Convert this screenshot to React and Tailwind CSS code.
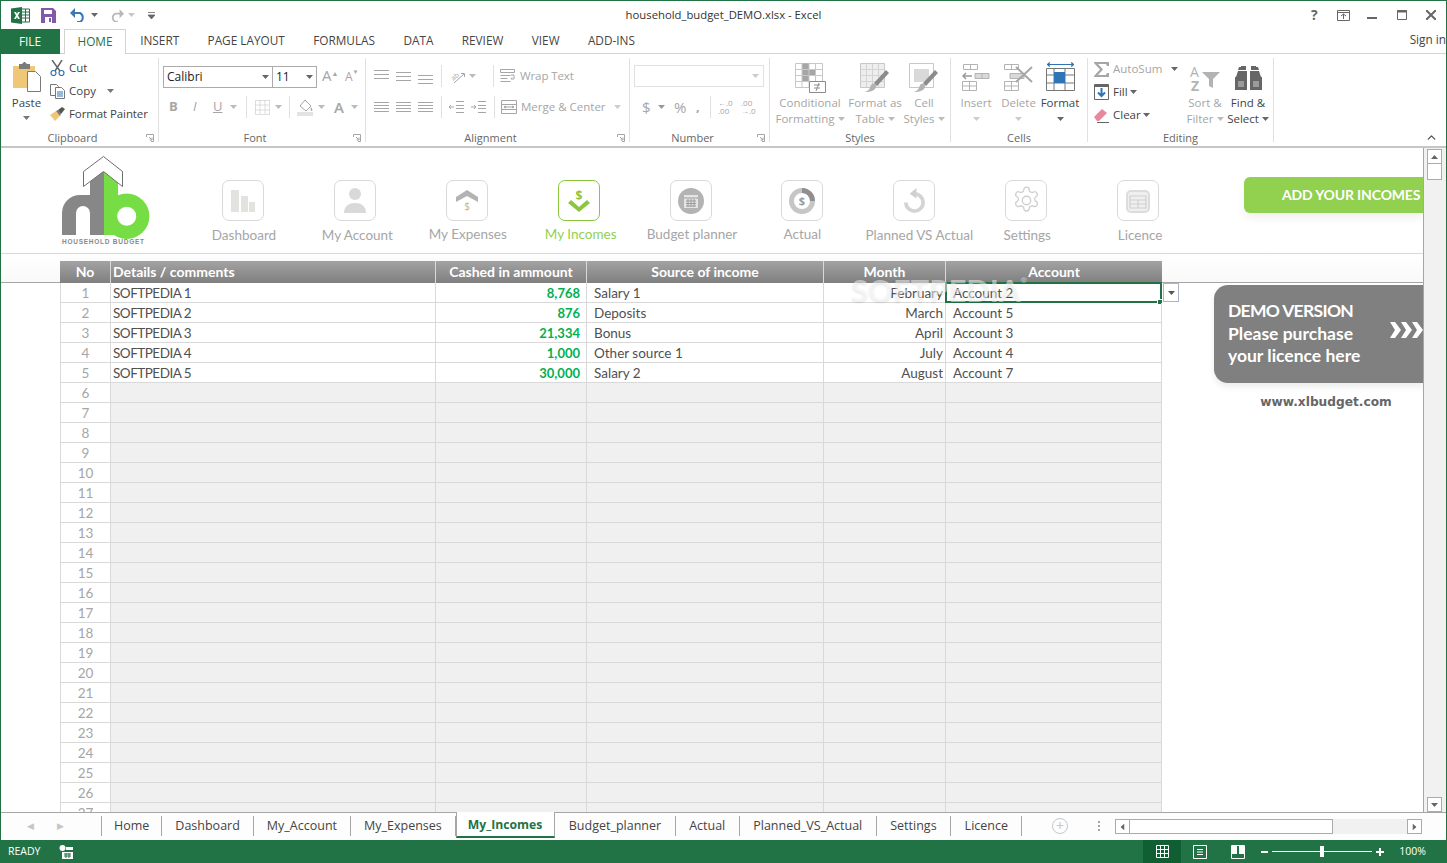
import { ChevronUp } from "lucide-react";

const rows = [
  ["SOFTPEDIA 1", "8,768", "Salary 1", "February", "Account 2"],
  ["SOFTPEDIA 2", "876", "Deposits", "March", "Account 5"],
  ["SOFTPEDIA 3", "21,334", "Bonus", "April", "Account 3"],
  ["SOFTPEDIA 4", "1,000", "Other source 1", "July", "Account 4"],
  ["SOFTPEDIA 5", "30,000", "Salary 2", "August", "Account 7"],
];
const emptyRows = Array.from({ length: 22 }, (_, i) => i + 6);

const sheets = ["Home", "Dashboard", "My_Account", "My_Expenses", "My_Incomes", "Budget_planner", "Actual", "Planned_VS_Actual", "Settings", "Licence"];

const Caret = ({ className = "" }) => (
  <svg width="7" height="4" viewBox="0 0 7 4" className={`shrink-0 ${className}`}>
    <path d="M0 0h7L3.5 4z" fill="currentColor" />
  </svg>
);

// lines used by the alignment buttons
const Lines = ({ rows: r }) => (
  <svg width="15" height="15" viewBox="0 0 15 15" className="shrink-0">
    {r.map((y, i) => (
      <path key={i} d={`M0 ${y}.5h15`} stroke="#a6a6a6" />
    ))}
  </svg>
);

const Group = ({ width, label, launcher, children }) => (
  <div className={`${width} h-[84px] mt-[4px] border-r border-[#e1e1e1] flex flex-col shrink-0`}>
    <div className="h-[73px] flex">{children}</div>
    <div className={`relative h-[11px] leading-[14px] text-center text-[11px] text-[#666] ${launcher ? "pr-[14px]" : ""}`}>
      {label}
      {launcher && (
        <svg width="8" height="8" viewBox="0 0 8 8" className="absolute right-[4px] top-[3px]">
          <path d="M.5 3V.5H7.5V7.5H5M3 3l3 3M6 3.5V6H3.5" fill="none" stroke="#a6a6a6" />
        </svg>
      )}
    </div>
  </div>
);

const BigButton = ({ width, icon, line1, line2, caret, dark }) => (
  <div className={`${width} flex flex-col items-center shrink-0 leading-[16px] text-[11.5px] ${dark ? "text-[#444]" : "text-[#a6a6a6]"}`}>
    <div className="h-[31px] mt-[4px] flex items-center justify-center">{icon}</div>
    <div className="mt-[2px] whitespace-nowrap">{line1}</div>
    <div className="flex items-center gap-[3px] whitespace-nowrap h-[16px]">
      {line2}
      {caret && <Caret className={dark ? "text-[#666]" : "text-[#bbb]"} />}
    </div>
  </div>
);

const Divider = ({ className = "" }) => <div className={`w-px h-[22px] bg-[#e1e1e1] shrink-0 ${className}`} />;

const Logo = () => (
  <svg width="92" height="92" viewBox="0 0 92 92" className="shrink-0">
    <path d="M2 80V58a18 18 0 0 1 18-18h10V16h14v64H30V58a7 7 0 0 0-7-7a7 7 0 0 0-7 7v22z" fill="#878787" />
    <path d="M44 16L58 27V80H44z" fill="#76dd45" />
    <circle cx="66.7" cy="61.3" r="22.7" fill="#76dd45" />
    <circle cx="66.7" cy="61.3" r="9.5" fill="#fff" />
    <path d="M23.5 16.500L43.5 1.500L62.5 16.500V31.500L43.5 16.500L23.5 31.500z" fill="#fff" stroke="#6f6f6f" />
    <text x="2" y="89" fontSize="6.5" fontWeight="700" letterSpacing="0.75" fill="#8a8a8a" fontFamily="'Liberation Sans',sans-serif">HOUSEHOLD BUDGET</text>
  </svg>
);

const navItems = [
  {
    label: "Dashboard",
    labelClass: "ml-[2px] mt-[5px]",
    icon: (
      <svg width="24" height="22" viewBox="0 0 24 22">
        <path d="M0 0h8v22H0zM10 6h7v16h-7zM18 12h6v10h-6z" fill="#e2e2df" />
      </svg>
    ),
  },
  {
    label: "My Account",
    labelClass: "ml-[5px] mt-[5px]",
    icon: (
      <svg width="24" height="25" viewBox="0 0 24 25">
        <circle cx="12" cy="6" r="6" fill="#d9d9d9" />
        <path d="M1 25c0-7 5-10 11-10s11 3 11 10z" fill="#d9d9d9" />
      </svg>
    ),
  },
  {
    label: "My Expenses",
    labelClass: "ml-[2px] mt-[4px]",
    icon: (
      <svg width="22" height="21" viewBox="0 0 22 21" className="overflow-visible">
        <path d="M0 7L11 0l11 7v5L11 6 0 12z" fill="#b3b3b3" />
        <text x="11" y="20" fontSize="10" textAnchor="middle" fill="#b3b3b3" fontFamily="'Open Sans',sans-serif">$</text>
      </svg>
    ),
  },
  {
    label: "My Incomes",
    active: true,
    labelClass: "ml-[4px] mt-[4px]",
    icon: (
      <svg width="22" height="22" viewBox="0 0 22 22" className="overflow-visible">
        <text x="11" y="10" fontSize="12" textAnchor="middle" fontWeight="700" fill="#8cc63f" fontFamily="'Open Sans',sans-serif">$</text>
        <path d="M0 13l3-3 8 7 8-7 3 3-11 9z" fill="#8cc63f" />
      </svg>
    ),
  },
  {
    label: "Budget planner",
    labelClass: "ml-[3px] mt-[4px]",
    icon: (
      <svg width="26" height="26" viewBox="0 0 26 26">
        <circle cx="13" cy="13" r="13" fill="#b3b3b3" />
        <path d="M6 7h14v13H6z" fill="#e4e4e4" />
        <path d="M6 10h14M8 13h10M8 15.5h10M8 18h10M10 11v8M13 11v8M16 11v8" stroke="#9a9a9a" />
      </svg>
    ),
  },
  {
    label: "Actual",
    labelClass: "mt-[4px]",
    icon: (
      <svg width="26" height="26" viewBox="0 0 26 26">
        <circle cx="13" cy="13" r="10.5" fill="none" stroke="#c6c6c6" strokeWidth="5" />
        <path d="M13 2.500A10.500 10.500 0 0 1 23.5 13" fill="none" stroke="#8f8f8f" strokeWidth="5" />
        <text x="13" y="17" fontSize="11" fontWeight="700" textAnchor="middle" fill="#9a9a9a" fontFamily="'Open Sans',sans-serif">$</text>
      </svg>
    ),
  },
  {
    label: "Planned VS Actual",
    labelClass: "ml-[10px] mt-[5px]",
    icon: (
      <svg width="23" height="25" viewBox="0 0 24 26">
        <path d="M12 6a9 9 0 1 1-9 9" fill="none" stroke="#d4d4d4" strokeWidth="4" />
        <path d="M14 0v11l-7-5z" fill="#cfcfcf" />
      </svg>
    ),
  },
  {
    label: "Settings",
    labelClass: "ml-[2px] mt-[5px]",
    icon: (
      <svg width="29" height="29" viewBox="0 0 24 24" fill="none" stroke="#cfcfcf" strokeWidth="1.1">
        <circle cx="12" cy="12" r="3.5" />
        <path d="M12.200 1h-.4a2 2 0 0 0-2 2v.2a2 2 0 0 1-1 1.700l-.4.200a2 2 0 0 1-2 0l-.2-.1a2 2 0 0 0-2.700.7l-.2.400a2 2 0 0 0 .7 2.700l.2.100a2 2 0 0 1 1 1.700v.5a2 2 0 0 1-1 1.700l-.2.100a2 2 0 0 0-.7 2.700l.2.400a2 2 0 0 0 2.700.7l.2-.1a2 2 0 0 1 2 0l.4.200a2 2 0 0 1 1 1.700v.2a2 2 0 0 0 2 2h.4a2 2 0 0 0 2-2v-.2a2 2 0 0 1 1-1.700l.4-.2a2 2 0 0 1 2 0l.2.100a2 2 0 0 0 2.700-.7l.2-.4a2 2 0 0 0-.7-2.700l-.2-.1a2 2 0 0 1-1-1.700v-.5a2 2 0 0 1 1-1.700l.2-.1a2 2 0 0 0 .7-2.700l-.2-.4a2 2 0 0 0-2.700-.7l-.2.100a2 2 0 0 1-2 0l-.4-.2a2 2 0 0 1-1-1.700V3a2 2 0 0 0-2-2z" />
      </svg>
    ),
  },
  {
    label: "Licence",
    labelClass: "ml-[4px] mt-[5px]",
    icon: (
      <svg width="24" height="24" viewBox="0 0 24 24" fill="none" stroke="#dcdcdc">
        <rect x="1" y="2" width="22" height="21" rx="4" strokeWidth="2" fill="#efefef" />
        <path d="M4 7h16v12H4zM4 11h16M4 15h16M12 11v8" strokeWidth="1.2" fill="none" stroke="#d0d0d0" />
      </svg>
    ),
  },
];

const Ribbon = () => (
  <div className="h-[94px] flex shrink-0 border-b-2 border-[#c6c6c6] text-[#444] text-[11.5px]">
    <Group width="w-[158px]" label="Clipboard" launcher>
      <div className="w-[49px] flex flex-col items-center pl-[2px] shrink-0">
        <svg width="30" height="30" viewBox="0 0 30 30" className="mt-[4px]">
          <path d="M1 4h22v22H1z" fill="#f0c777" />
          <path d="M7 2h3l2-2h1l2 2h3v5H7z" fill="#7b7b7b" />
          <path d="M15.5 9.500h8l5 5v15h-13z" fill="#fff" stroke="#7b7b7b" />
        </svg>
        <div className="mt-[3px] leading-[16px]">Paste</div>
        <Caret className="text-[#777] mt-[5px]" />
      </div>
      <div className="flex flex-col mt-[2px] gap-[7px]">
        <div className="flex items-center gap-[4px] h-[16px]">
          <svg width="15" height="16" viewBox="0 0 15 16" fill="none">
            <path d="M2 0l8 11M12 0L5 11" stroke="#666" strokeWidth="1.5" />
            <circle cx="3.5" cy="13" r="2.5" stroke="#2f75b5" strokeWidth="1.2" />
            <circle cx="11.5" cy="13" r="2.5" stroke="#2f75b5" strokeWidth="1.2" />
          </svg>
          Cut
        </div>
        <div className="flex items-center gap-[4px] h-[16px]">
          <svg width="15" height="15" viewBox="0 0 15 15" fill="none">
            <path d="M.5.500h6l2 2v9H.5z" fill="#fff" stroke="#777" />
            <path d="M5.5 3.500h6l3 3v8h-9z" fill="#fff" stroke="#777" />
            <path d="M7 8h6M7 10h6M7 12h6" stroke="#2f75b5" />
          </svg>
          Copy
          <Caret className="ml-[7px] text-[#777]" />
        </div>
        <div className="flex items-center gap-[4px] h-[16px] whitespace-nowrap tracking-[-0.1px]">
          <svg width="15" height="14" viewBox="0 0 15 14">
            <path d="M0 8l6-4 4 5-5 5z" fill="#f0c777" />
            <path d="M6 4l2-1 3 4-1 2z" fill="#777" />
            <path d="M8 3l4-3 3 2-4 5z" fill="#555" />
          </svg>
          Format Painter
        </div>
      </div>
    </Group>

    <Group width="w-[207px]" label="Font" launcher>
      <div className="flex flex-col pl-[4px] pt-[8px] text-[#a6a6a6]">
        <div className="flex items-center">
          <div className="w-[110px] h-[22px] border border-[#ababab] flex items-center justify-between px-[3px] text-[#222] text-[12px]">
            Calibri
            <Caret className="text-[#666]" />
          </div>
          <div className="w-[44px] h-[22px] border border-l-0 border-[#ababab] flex items-center justify-between px-[3px] text-[#222] text-[12px]">
            11
            <Caret className="text-[#666]" />
          </div>
          <div className="ml-[5px] w-[20px] text-[15px] leading-[15px]">A<span className="relative -top-[5px] text-[7px]">▲</span></div>
          <div className="ml-[3px] text-[12px] leading-[15px] mt-[2px]">A<span className="relative -top-[7px] text-[6px]">▼</span></div>
        </div>
        <div className="flex items-center mt-[8px] pl-[6px] h-[22px]">
          <span className="w-[22px] font-bold text-[13px]">B</span>
          <span className="w-[22px] italic text-[13px] pl-[2px]">I</span>
          <span className="w-[17px] underline text-[13px]">U</span>
          <Caret className="text-[#bbb]" />
          <Divider className="ml-[9px]" />
          <svg width="15" height="15" viewBox="0 0 15 15" className="ml-[8px]" fill="none" stroke="#bdbdbd" strokeDasharray="1 1">
            <path d="M.5.500h14v14H.5zM5 .5v14M10 .5v14M.5 5h14M.5 10h14" />
          </svg>
          <Caret className="ml-[5px] text-[#bbb]" />
          <Divider className="ml-[7px]" />
          <svg width="16" height="17" viewBox="0 0 16 17" className="ml-[7px]">
            <path d="M3 7l5-6 6 6-5 5z" fill="#fff" stroke="#a6a6a6" />
            <path d="M14 8c1 2 2 3 1 4-1 0-2-1-1-4z" fill="#a6a6a6" />
            <path d="M0 13h16v4H0z" fill="#e3e3e3" />
          </svg>
          <Caret className="ml-[5px] text-[#bbb]" />
          <span className="ml-[9px] w-[16px] text-[15px] font-semibold">A</span>
          <Caret className="ml-[1px] text-[#bbb]" />
        </div>
      </div>
    </Group>

    <Group width="w-[264px]" label="Alignment" launcher>
      <div className="flex flex-col pl-[8px] pt-[6px]">
        <div className="flex items-center h-[24px]">
          <div className="flex gap-[7px] w-[66px]">
            <Lines rows={[1, 5, 9]} />
            <Lines rows={[3, 7, 11]} />
            <Lines rows={[6, 10, 14]} />
          </div>
          <Divider className="ml-[1px]" />
          <svg width="15" height="15" viewBox="0 0 15 15" className="ml-[8px] overflow-visible" fill="none" stroke="#a6a6a6">
            <text x="1" y="10" fontSize="7" stroke="none" fill="#a6a6a6" transform="rotate(-40 5 8)" fontFamily="'Open Sans',sans-serif">ab</text>
            <path d="M4 14L14 5M11 4.500h3.500V8" />
          </svg>
          <Caret className="ml-[4px] text-[#bbb]" />
          <Divider className="ml-[17px]" />
          <svg width="16" height="14" viewBox="0 0 16 14" className="ml-[6px]" fill="none" stroke="#a6a6a6">
            <path d="M.5.500h14v3H.5zM.5 6.500h10M.5 9.500h7M.5 12.500h10M11 6h3v4h-3l1-1.500" />
          </svg>
          <span className="ml-[4px] whitespace-nowrap text-[#a6a6a6] tracking-[-0.1px]">Wrap Text</span>
        </div>
        <div className="flex items-center h-[24px] mt-[7px]">
          <div className="flex gap-[7px] w-[66px]">
            <Lines rows={[2, 5, 8, 11]} />
            <Lines rows={[2, 5, 8, 11]} />
            <Lines rows={[2, 5, 8, 11]} />
          </div>
          <Divider className="ml-[1px]" />
          <svg width="15" height="12" viewBox="0 0 15 12" className="ml-[7px]" fill="none" stroke="#a6a6a6">
            <path d="M7 .5h8M7 4.500h8M7 7.500h8M7 11.500h8M5 6H0m2-2L0 6l2 2" />
          </svg>
          <svg width="15" height="12" viewBox="0 0 15 12" className="ml-[7px]" fill="none" stroke="#a6a6a6">
            <path d="M7 .5h8M7 4.500h8M7 7.500h8M7 11.500h8M0 6h5M3 4l2 2-2 2" />
          </svg>
          <Divider className="ml-[8px]" />
          <svg width="16" height="14" viewBox="0 0 16 14" className="ml-[6px]" fill="none" stroke="#a6a6a6">
            <path d="M.5.500h15v13H.5zM.5 4.500h15M.5 9.500h15M3 7h10M5 6l-2 1 2 1M11 6l2 1-2 1" />
          </svg>
          <span className="ml-[4px] whitespace-nowrap text-[#a6a6a6]">Merge &amp; Center</span>
          <Caret className="ml-[8px] text-[#ccc]" />
        </div>
      </div>
    </Group>

    <Group width="w-[140px]" label="Number" launcher>
      <div className="flex flex-col pl-[4px] pt-[7px] text-[#a6a6a6]">
        <div className="w-[130px] h-[22px] border border-[#e1e1e1] flex items-center justify-end pr-[4px]">
          <Caret className="text-[#ccc]" />
        </div>
        <div className="flex items-center h-[22px] mt-[9px] pl-[8px]">
          <span className="text-[15px] w-[16px]">$</span>
          <Caret className="text-[#999]" />
          <span className="ml-[9px] text-[15px] w-[22px]">%</span>
          <span className="font-bold text-[13px] w-[14px]">,</span>
          <Divider />
          <span className="ml-[7px] w-[23px] text-[8px] leading-[8px]">←.0<br />.00</span>
          <span className="w-[16px] text-[8px] leading-[8px]">.00<br />→.0</span>
        </div>
      </div>
    </Group>

    <Group width="w-[181px]" label="Styles">
      <BigButton
        width="w-[80px]"
        line1="Conditional"
        line2="Formatting"
        caret
        icon={
          <svg width="31" height="30" viewBox="0 0 31 30" fill="none">
            <path d="M.5.500h27v24H.5z" stroke="#c8c8c8" />
            <path d="M7 .5h7v6h6v6h-6v6H7z" fill="#a6a6a6" />
            <path d="M.5 6.500h27M.5 12.500h27M.5 18.500h27M7 .5v24M14 .5v24M20.500.5v24" stroke="#c8c8c8" />
            <path d="M14.5 18.500h16v11h-16z" fill="#fff" stroke="#8c8c8c" />
            <path d="M19 22h6M19 25h6M24 20l-3 8" stroke="#8c8c8c" />
          </svg>
        }
      />
      <BigButton
        width="w-[50px]"
        line1="Format as"
        line2="Table"
        caret
        icon={
          <svg width="30" height="30" viewBox="0 0 30 30" fill="none">
            <path d="M.5.500h24v24H.5z" fill="#eee" stroke="#c8c8c8" />
            <path d="M.5 6.500h24M.5 12.500h24M.5 18.500h24M6.500.5v24M12.500.5v24M18.500.5v24" stroke="#d4d4d4" />
            <path d="M29 10L17 23l-3-3L26 7z" fill="#8c8c8c" />
            <path d="M11 22c3-3 6-1 5 2-1 4-6 5-11 5 3-1 5-3 6-7z" fill="#b3b3b3" />
          </svg>
        }
      />
      <BigButton
        width="w-[48px]"
        line1="Cell"
        line2="Styles"
        caret
        icon={
          <svg width="30" height="30" viewBox="0 0 30 30" fill="none">
            <path d="M.5.500h24v24H.5z" stroke="#c8c8c8" />
            <path d="M5 6h15v13H5z" fill="#d9d9d9" />
            <path d="M29 10L17 23l-3-3L26 7z" fill="#8c8c8c" />
            <path d="M11 22c3-3 6-1 5 2-1 4-6 5-11 5 3-1 5-3 6-7z" fill="#b3b3b3" />
          </svg>
        }
      />
    </Group>

    <Group width="w-[137px]" label="Cells">
      <BigButton
        width="w-[50px]"
        line1="Insert"
        line2={<Caret className="text-[#ccc]" />}
        icon={
          <svg width="28" height="28" viewBox="0 0 28 28" fill="none" stroke="#b3b3b3">
            <path d="M1.500.5h14v5h-14zM8.500.5v5M.5 17.500h14v9h-14zM.5 22h14M7.500 17.500v9" />
            <path d="M13 9.500h14v5H13zM20 9.500v5" fill="#d9d9d9" />
            <path d="M10 12H1M4 9l-3 3 3 3" stroke="#999" strokeWidth="1.5" />
          </svg>
        }
      />
      <BigButton
        width="w-[35px]"
        line1="Delete"
        line2={<Caret className="text-[#ccc]" />}
        icon={
          <svg width="30" height="28" viewBox="0 0 30 28" fill="none" stroke="#b3b3b3">
            <path d="M.5.500h14v5H.5zM7.500.5v5M.5 17.500h14v9H.5zM.5 22h14M7.500 17.500v9" />
            <path d="M6 9.500h14v5H6z" fill="#d9d9d9" />
            <path d="M12 3l16 15M28 3L12 18" stroke="#a6a6a6" strokeWidth="2" />
          </svg>
        }
      />
      <BigButton
        width="w-[48px]"
        dark
        line1="Format"
        line2={<Caret className="text-[#666]" />}
        icon={
          <svg width="29" height="31" viewBox="0 0 29 31" fill="none">
            <path d="M1 2.500h27M3 .5v4M26 .5v4M1 2.500l3-2M1 2.500l3 2M28 2.500l-3-2M28 2.500l-3 2" stroke="#2f75b5" />
            <path d="M.5 6.500h28v22H.5zM.5 13h28M.5 21h28M8 6.500v22M19 6.500v22" stroke="#777" />
            <path d="M8 10h11v11H8z" fill="#2f75b5" />
          </svg>
        }
      />
    </Group>

    <Group width="w-[186px]" label="Editing">
      <div className="w-[101px] flex flex-col pl-[6px] pt-[3px] gap-[7px] shrink-0">
        <div className="flex items-center gap-[4px] h-[16px] text-[#a6a6a6]">
          <svg width="15" height="15" viewBox="0 0 15 15"><path d="M0 0h15v4h-2l-1-2H4l5 5.500L4 13h8l1-2h2v4H0v-1l6-6.500L0 1z" fill="#a6a6a6" /></svg>
          AutoSum
          <Caret className="ml-[5px] text-[#666]" />
        </div>
        <div className="flex items-center gap-[4px] h-[16px]">
          <svg width="15" height="16" viewBox="0 0 15 16" fill="none">
            <path d="M.5.500h14v15H.5z" stroke="#666" />
            <path d="M1 1h13v2H1z" fill="#666" />
            <path d="M7.500 4v8M4 8.500l3.500 3.500L11 8.500" stroke="#2f75b5" strokeWidth="2" />
          </svg>
          Fill
          <Caret className="-ml-[2px] text-[#666]" />
        </div>
        <div className="flex items-center gap-[4px] h-[16px]">
          <svg width="15" height="15" viewBox="0 0 15 15">
            <path d="M0 9l8-8 5 4-8 8H3z" fill="#e8889b" />
            <path d="M3 14.500h12" stroke="#666" />
          </svg>
          Clear
          <Caret className="-ml-[2px] text-[#666]" />
        </div>
      </div>
      <BigButton
        width="w-[32px]"
        line1="Sort &"
        line2="Filter"
        caret
        icon={
          <svg width="30" height="28" viewBox="0 0 30 28" className="overflow-visible">
            <text x="0" y="12.500" fontSize="14" fill="#b3b3b3" fontFamily="'Open Sans',sans-serif">A</text>
            <text x="1" y="27" fontSize="14" fontWeight="700" fill="#b3b3b3" fontFamily="'Open Sans',sans-serif">Z</text>
            <path d="M12 8h18l-7 7v9l-4-2v-7z" fill="#b3b3b3" />
          </svg>
        }
      />
      <div className="w-[9px] shrink-0" />
      <BigButton
        width="w-[36px]"
        dark
        line1="Find &"
        line2="Select"
        caret
        icon={
          <svg width="27" height="24" viewBox="0 0 27 24">
            <path d="M3 4h8V0H6v1H4zM16 4h8l-1-3h-2V0h-5zM1 11l2-6h9v19H0V11zM15 5h9l2 6h1v13H15z" fill="#666" />
            <path d="M3 15h6v6H3zM18 15h6v6h-6z" fill="#fff" opacity=".35" />
          </svg>
        }
      />
    </Group>

    <div className="flex-1 flex items-end justify-end pr-[8px] pb-[2px]">
      <ChevronUp size={13} strokeWidth={2.5} className="text-[#555]" />
    </div>
  </div>
);

const Nav = () => (
  <div className="h-[106px] border-b border-[#d9d9d9] flex shrink-0 overflow-hidden">
    <div className="w-[59px] shrink-0" />
    <div className="pt-[7px] w-[127px] shrink-0"><Logo /></div>
    <div className="flex pt-[32px] shrink-0">
      {navItems.map((item) => (
        <div key={item.label} className="w-[111.9px] flex flex-col items-center shrink-0">
          <div
            className={`w-[42px] h-[41px] rounded-[7px] border flex items-center justify-center ${
              item.active ? "border-[#8cc63f]" : "border-[#d9d9d9]"
            }`}
          >
            {item.icon}
          </div>
          <div
            className={`${item.labelClass} font-['Lato',sans-serif] text-[13.5px] leading-[18px] whitespace-nowrap ${
              item.active ? "text-[#92d050]" : "text-[#a6a6a6]"
            }`}
          >
            {item.label}
          </div>
        </div>
      ))}
    </div>
    <div className="ml-auto mt-[29px] w-[179px] h-[36px] bg-[#92d050] rounded-l-[6px] shadow-[0_5px_8px_rgba(0,0,0,0.06)] text-white font-['Lato',sans-serif] font-bold text-[14px] tracking-[-0.15px] leading-[36px] pl-[38px] whitespace-nowrap overflow-hidden">
      ADD YOUR INCOMES
    </div>
  </div>
);

const cols = "grid grid-cols-[51px_325px_151px_237px_122px_216px]";

const Table = () => (
  <div className="w-[1102px] shrink-0 relative">
    <div className="h-[7px] bg-gradient-to-b from-white to-[#fafafa]" />
    <div className={`${cols} h-[22px] bg-gradient-to-b from-[#a3a3a3] to-[#7f7f7f] text-white font-bold text-[14px] leading-[22px] text-center`}>
      <div className="border-r border-[#d9d9d9]">No</div>
      <div className="border-r border-[#d9d9d9] text-left pl-[2px]">Details / comments</div>
      <div className="border-r border-[#d9d9d9]">Cashed in ammount</div>
      <div className="border-r border-[#d9d9d9]">Source of income</div>
      <div className="border-r border-[#d9d9d9]">Month</div>
      <div>Account</div>
    </div>
    {rows.map((r, i) => (
      <div key={r[0]} className={`${cols} grid-rows-[19px] h-[20px] leading-[21px] text-[#505050] border-b border-[#d9d9d9]`}>
        <div className="border-x border-[#d9d9d9] text-center text-[#a6a6a6]">{i + 1}</div>
        <div className="border-r border-[#d9d9d9] pl-[2px] tracking-[-0.5px]">{r[0]}</div>
        <div className="border-r border-[#d9d9d9] text-right pr-[6px] font-bold text-[13px] text-[#00b050]">{r[1]}</div>
        <div className="border-r border-[#d9d9d9] pl-[7px]">{r[2]}</div>
        <div className="border-r border-[#d9d9d9] text-right pr-[2px]">{r[3]}</div>
        <div className="border-r border-[#d9d9d9] pl-[7px] relative">
          {r[4]}
          {i === 0 && (
            <>
              <div className="absolute -left-[1px] -top-[1px] w-[217px] h-[21px] border-2 border-[#217346]" />
              <div className="absolute -right-[2px] top-[16px] w-[6px] h-[6px] bg-[#217346] border border-white" />
              <div className="absolute -right-[18px] top-0 w-[16px] h-[19px] bg-white border border-[#a9b4c6] flex items-center justify-center text-[#555]">
                <Caret />
              </div>
            </>
          )}
        </div>
      </div>
    ))}
    {emptyRows.map((n) => (
      <div key={n} className={`${cols} grid-rows-[19px] h-[20px] leading-[21px] border-b border-[#d9d9d9]`}>
        <div className="border-x border-[#d9d9d9] text-center text-[#a6a6a6]">{n}</div>
        <div className="bg-[#f0f0f0] border-r border-[#d9d9d9]" />
        <div className="bg-[#f0f0f0] border-r border-[#d9d9d9]" />
        <div className="bg-[#f0f0f0] border-r border-[#d9d9d9]" />
        <div className="bg-[#f0f0f0] border-r border-[#d9d9d9]" />
        <div className="bg-[#f0f0f0] border-r border-[#d9d9d9]" />
      </div>
    ))}
    {/* watermark */}
    <div className="absolute left-[791px] top-[20px] text-[31px] leading-[32px] font-bold text-white/50 [text-shadow:0_1px_2px_rgba(0,0,0,0.1)] pointer-events-none whitespace-nowrap">
      SOFTPEDIA<span className="align-top text-[8px] leading-[12px]">®</span>
    </div>
  </div>
);

const Sheet = () => (
  <div className="flex-1 flex min-h-0 border-b border-[#a6a6a6]">
    <div className="w-[1423px] shrink-0 flex flex-col min-h-0 border-r border-[#a6a6a6]">
      <Nav />
      <div className="flex-1 flex min-h-0 overflow-hidden font-['Lato',sans-serif] text-[13.5px]">
        <div className="w-[59px] h-[29px] shrink-0 bg-gradient-to-b from-white to-[#f9f9f9] border-b border-[#a6a6a6]" />
        <Table />
        <div className="flex-1 min-w-0 flex flex-col">
          <div className="h-[29px] shrink-0 bg-gradient-to-b from-white to-[#f9f9f9] border-b border-[#a6a6a6]" />
          <div className="ml-[52px] mt-[2px] h-[98px] bg-[#808080] rounded-l-[14px] shadow-[0_4px_6px_rgba(0,0,0,0.08)] flex items-center text-white font-bold text-[17.5px] leading-[22.5px] pl-[14px] overflow-hidden">
            <div className="whitespace-nowrap">
              <span className="tracking-[-0.7px]">DEMO VERSION</span>
              <br />
              Please purchase
              <br />
              your licence here
            </div>
            <svg width="33" height="16" viewBox="0 0 33 16" className="ml-auto mb-[8px] shrink-0" fill="#fff">
              <path d="M0 0h5l6 8-6 8H0l5-8zM11 0h5l6 8-6 8h-5l5-8zM22 0h5l6 8-6 8h-5l5-8z" />
            </svg>
          </div>
          <div className="ml-[52px] mt-[10px] w-[209px] text-center font-['DejaVu_Sans',sans-serif] font-bold text-[12.2px] leading-[18px] text-[#666] pl-[15px]">
            www.xlbudget.com
          </div>
        </div>
      </div>
    </div>
    <div className="flex-1 bg-[#f1f1f1] flex flex-col items-center justify-between text-[#666] pr-[2px]">
      <div className="w-full flex flex-col items-center pt-[1px]">
        <div className="w-[15px] h-[15px] bg-white border border-[#ababab] flex items-center justify-center"><Caret className="rotate-180" /></div>
        <div className="w-[15px] h-[16px] bg-white border-x border-b border-[#ababab]" />
      </div>
      <div className="w-[15px] h-[15px] bg-white border border-[#ababab] flex items-center justify-center"><Caret /></div>
    </div>
  </div>
);

const tabClass = (s, i) => {
  if (s === "My_Incomes") {
    return "h-[26px] leading-[25px] pl-[11px] pr-[12px] bg-white border-x border-[#a6a6a6] -mt-px border-b-2 border-b-[#217346] text-[#217346] font-bold text-[12.2px]";
  }
  if (i === 0) return "h-[20px] mt-[3px] leading-[19px] pl-[12px] pr-[12px] border-x border-[#a6a6a6]";
  if (i > 4) return "h-[20px] mt-[3px] leading-[19px] px-[13.5px] border-r border-[#a6a6a6]";
  return "h-[20px] mt-[3px] leading-[19px] px-[13px] border-r border-[#a6a6a6]";
};

const SheetTabs = () => (
  <div className="h-[27px] shrink-0 flex items-start bg-[#fdfdfd] text-[12.5px] text-[#444]">
    <div className="w-[100px] h-[20px] mt-[3px] shrink-0 flex items-center text-[#c6c6c6] text-[9px] pl-[26px] gap-[23px]">
      <span>◀</span>
      <span>▶</span>
    </div>
    {sheets.map((s, i) => (
      <div key={s} className={tabClass(s, i)}>
        {s}
      </div>
    ))}
    <div className="ml-auto mr-[24px] flex items-start shrink-0">
      <div className="mt-[5px] w-[16px] h-[16px] rounded-full border border-[#c6c6c6] flex items-center justify-center text-[#c6c6c6] text-[14px] leading-[14px] shrink-0">+</div>
      <div className="ml-[30px] mt-[8px] w-[2px] h-[11px] shrink-0 bg-[repeating-linear-gradient(#a6a6a6_0_2px,transparent_2px_4px)]" />
      <div className="ml-[15px] mt-[6px] w-[307px] h-[15px] flex bg-[#f1f1f1] shrink-0 text-[#666]">
        <div className="w-[15px] border border-[#ababab] bg-white flex items-center justify-center"><Caret className="rotate-90" /></div>
        <div className="w-[203px] border-y border-r border-[#ababab] bg-white" />
        <div className="flex-1" />
        <div className="w-[15px] border border-[#ababab] bg-white flex items-center justify-center"><Caret className="-rotate-90" /></div>
      </div>
    </div>
  </div>
);

const StatusBar = () => (
  <div className="h-[23px] shrink-0 bg-[#217346] text-white text-[10.5px] flex items-center">
    <span className="ml-[7px]">READY</span>
    <svg width="14" height="14" viewBox="0 0 14 14" className="ml-[19px]">
      <circle cx="3.5" cy="3" r="3" fill="#fff" />
      <path d="M3 7h11v7H3z" fill="#fff" />
      <path d="M7 2h7v3H7z" fill="#fff" />
      <path d="M5 9h7M5 11h7M7 8v5M10 8v5" stroke="#217346" />
    </svg>
    <div className="ml-auto w-[38px] h-[23px] bg-[#0f5f33] flex items-center justify-center">
      <svg width="13" height="13" viewBox="0 0 13 13" fill="none" stroke="#fff">
        <path d="M.5.500h12v12H.5zM4.500.5v12M8.500.5v12M.5 4.500h12M.5 8.500h12" />
      </svg>
    </div>
    <div className="w-[38px] flex justify-center">
      <svg width="14" height="14" viewBox="0 0 14 14" fill="none" stroke="#fff">
        <path d="M.5.500h13v13H.5zM4 4.500h6M4 7h6M4 9.500h6" />
      </svg>
    </div>
    <div className="w-[38px] flex justify-center">
      <svg width="14" height="14" viewBox="0 0 14 14">
        <path d="M.5.500h13v13H.5z" fill="none" stroke="#fff" />
        <path d="M1 1h5v8H1zM8 1h5v8H8z" fill="#fff" />
      </svg>
    </div>
    <div className="ml-[4px] flex items-center">
      <div className="w-[7px] h-[2px] bg-white" />
      <div className="relative ml-[4px] w-[100px] h-px bg-white">
        <div className="absolute left-[48px] -top-[5px] w-[4px] h-[11px] bg-white" />
      </div>
      <svg width="8" height="8" viewBox="0 0 8 8" className="ml-[4px]"><path d="M3 0h2v3h3v2H5v3H3V5H0V3h3z" fill="#fff" /></svg>
    </div>
    <span className="ml-[15px] mr-[20px]">100%</span>
  </div>
);

export default function App() {
  return (
    <div className="w-[1447px] h-[863px] bg-white flex flex-col overflow-hidden border-x border-t border-[#217346] font-['Open_Sans',sans-serif] text-[#444]">
      {/* title bar */}
      <div className="h-[28px] shrink-0 flex items-center relative">
        <svg width="19" height="17" viewBox="0 0 19 17" className="ml-[10px]">
          <path d="M10 2h8.500v13H10z" fill="#fff" stroke="#217346" />
          <path d="M11 5h7M11 8h7M11 11h7M14.500 2v13" stroke="#217346" />
          <path d="M0 1.500L11 0v17L0 15.500z" fill="#217346" />
          <path d="M3 5h2l1 2 1-2h2L7 8.500 9 12H7L6 10l-1 2H3l2-3.500z" fill="#fff" />
        </svg>
        <svg width="15" height="15" viewBox="0 0 15 15" className="ml-[11px]">
          <path d="M0 0h12l3 3v12H0z" fill="#8059a8" />
          <path d="M3 2h8v4H3zM4 9h7v6H4z" fill="#fff" />
          <path d="M8 10h2v4H8z" fill="#8059a8" />
        </svg>
        <svg width="17" height="14" viewBox="0 0 17 14" className="ml-[14px]" fill="none">
          <path d="M1 5h9a5 5 0 0 1 0 9H7" stroke="#3c78b4" strokeWidth="2" />
          <path d="M5 0v10L0 5z" fill="#3c78b4" />
        </svg>
        <Caret className="ml-[4px] text-[#666]" />
        <svg width="15" height="13" viewBox="0 0 17 14" className="ml-[11px]" fill="none">
          <path d="M16 5H7a5 5 0 0 0 0 9h3" stroke="#b8b8b8" strokeWidth="2" />
          <path d="M12 0v10l5-5z" fill="#b8b8b8" />
        </svg>
        <Caret className="ml-[4px] text-[#c6c6c6]" />
        <svg width="7" height="7" viewBox="0 0 7 7" className="ml-[13px]">
          <path d="M0 .5h7M0 3h7L3.500 7z" stroke="#666" strokeWidth=".8" fill="#666" />
        </svg>
        <div className="absolute left-0 right-0 text-center text-[11.3px] text-[#333]">household_budget_DEMO.xlsx - Excel</div>
        <div className="ml-auto flex items-center text-[#666]">
          <span className="font-bold text-[14px] w-[8px] leading-[14px]">?</span>
          <svg width="13" height="11" viewBox="0 0 13 11" className="ml-[18px]" fill="none" stroke="#666">
            <path d="M.5.500h12v10H.5zM.5 2.500h12M6.500 9V4M4 6l2.500-2L9 6" />
          </svg>
          <svg width="10" height="12" viewBox="0 0 10 12" className="ml-[17px]"><path d="M0 8h10v2H0z" fill="#666" /></svg>
          <svg width="10" height="10" viewBox="0 0 10 10" className="ml-[20px]" fill="none" stroke="#666">
            <path d="M.5.500h9v9h-9z" />
            <path d="M0 1.500h10" strokeWidth="2" />
          </svg>
          <svg width="10" height="10" viewBox="0 0 10 10" className="ml-[19px] mr-[10px]" fill="none" stroke="#666" strokeWidth="2">
            <path d="M0 0l10 10M10 0L0 10" />
          </svg>
        </div>
      </div>

      {/* tabs */}
      <div className="h-[25px] shrink-0 flex border-b border-[#d2d2d2] text-[11.8px] relative">
        <div className="w-[60px] h-[25px] -ml-px bg-[#217346] text-white flex items-center justify-center">FILE</div>
        <div className="ml-[4px] w-[62px] h-[25px] border-x border-t border-[#d2d2d2] bg-white text-[#217346] flex items-center justify-center">HOME</div>
        {["INSERT", "PAGE LAYOUT", "FORMULAS", "DATA", "REVIEW", "VIEW", "ADD-INS"].map((t) => (
          <div key={t} className="px-[14.2px] flex items-center whitespace-nowrap">{t}</div>
        ))}
        <div className="ml-auto flex items-center -mt-[3px] whitespace-nowrap">Sign in</div>
      </div>

      <Ribbon />
      <Sheet />
      <SheetTabs />
      <StatusBar />
    </div>
  );
}
